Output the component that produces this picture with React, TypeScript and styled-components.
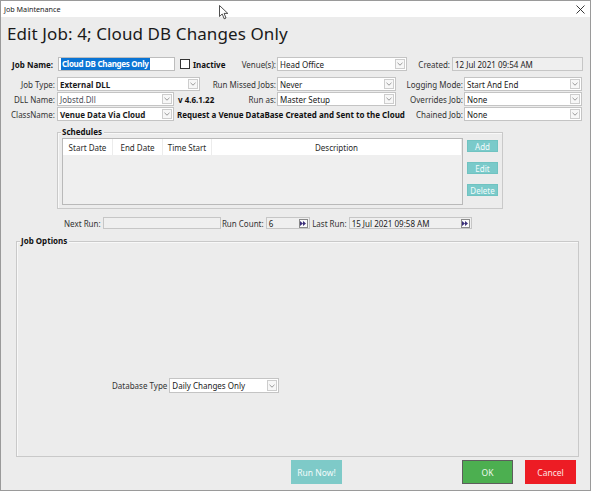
import React from "react";
import styled, { createGlobalStyle } from "styled-components";

const Global = createGlobalStyle`
  html, body { margin: 0; padding: 0; background: #ffffff; }
  * { box-sizing: border-box; }
`;

const Window = styled.div`
  position: relative;
  width: 591px;
  height: 491px;
  border: 1px solid #9a9a9a;
  background: #ececec;
  display: flex;
  flex-direction: column;
  overflow: hidden;
  font-family: "Noto Sans", "Open Sans", sans-serif;
  font-size: 8px;
  color: #262626;
`;

const TitleBar = styled.div`
  height: 16px;
  flex: none;
  background: #ffffff;
  display: flex;
  align-items: center;
  padding: 0 5px 0 3px;
  font-size: 7.2px;
  color: #1a1a1a;
`;

const TitleText = styled.span`
  flex: 1;
`;

const Cursor = styled.svg`
  position: absolute;
  left: 218px;
  top: 4px;
`;

const Heading = styled.h1`
  margin: 6px 0 0 0;
  padding-left: 6px;
  font-weight: 400;
  font-size: 17px;
  line-height: 22px;
  color: #1a1a1a;
  letter-spacing: 0.1px;
`;

const Form = styled.div`
  display: flex;
  flex-direction: column;
  margin-top: 12px;
`;

const Row = styled.div<{ $h?: number; $mt?: number; $pl?: number }>`
  display: flex;
  align-items: center;
  height: ${(p) => p.$h ?? 14}px;
  margin-top: ${(p) => p.$mt ?? 0}px;
  padding-left: ${(p) => p.$pl ?? 0}px;
  flex: none;
`;

const Label = styled.span<{ $w?: number; $pr?: number; $bold?: boolean }>`
  flex: none;
  width: ${(p) => (p.$w ? `${p.$w}px` : "auto")};
  padding-right: ${(p) => p.$pr ?? 1}px;
  text-align: right;
  white-space: nowrap;
  font-weight: ${(p) => (p.$bold ? 700 : 400)};
  color: ${(p) => (p.$bold ? "#111" : "#333")};
`;

const Cell = styled.span<{ $w: number; $pl?: number }>`
  flex: none;
  display: flex;
  align-items: center;
  width: ${(p) => p.$w}px;
  padding-left: ${(p) => p.$pl ?? 0}px;
  white-space: nowrap;
  font-weight: 700;
  color: #111;
`;

const TextBox = styled.div<{ $w: number; $h?: number; $gray?: boolean }>`
  flex: none;
  display: flex;
  align-items: center;
  width: ${(p) => p.$w}px;
  height: ${(p) => p.$h ?? 14}px;
  padding: 0 1px 0 2px;
  border: 1px solid ${(p) => (p.$gray ? "#c6c6c6" : "#bdbdbd")};
  background: ${(p) => (p.$gray ? "#efefef" : "#ffffff")};
  color: #222;
  white-space: nowrap;
`;

const Selected = styled.span`
  background: #0a74d4;
  color: #ffffff;
  font-weight: 700;
  padding: 0 1px;
  line-height: 12px;
  letter-spacing: -0.3px;
`;

const FillText = styled.span`
  flex: 1;
`;

const CheckBox = styled.span`
  width: 10px;
  height: 10px;
  border: 1px solid #333;
  background: #fff;
  margin-right: 3px;
  flex: none;
`;

const ComboBox = styled.div<{ $w: number; $h?: number }>`
  flex: none;
  display: flex;
  align-items: stretch;
  width: ${(p) => p.$w}px;
  height: ${(p) => p.$h ?? 14}px;
  border: 1px solid #c4c4c4;
  background: #ffffff;
`;

const ComboText = styled.span<{ $bold?: boolean; $dim?: boolean }>`
  flex: 1;
  display: flex;
  align-items: center;
  padding-left: 2px;
  white-space: nowrap;
  overflow: hidden;
  font-weight: ${(p) => (p.$bold ? 700 : 400)};
  color: ${(p) => (p.$dim ? "#4f4f5a" : "#1a1a1a")};
`;

const Arrow = styled.span`
  flex: none;
  width: 10px;
  margin: 1px 1px 1px 0;
  border: 1px solid #cdcdcd;
  background: #f7f7f7;
  display: flex;
  align-items: center;
  justify-content: center;
`;

const GroupBox = styled.div<{ $ml: number; $w: number; $h: number; $mt: number }>`
  position: relative;
  flex: none;
  margin-left: ${(p) => p.$ml}px;
  margin-top: ${(p) => p.$mt}px;
  width: ${(p) => p.$w}px;
  height: ${(p) => p.$h}px;
  border: 1px solid #c9c9c9;
  box-shadow: inset 1px 1px 0 #f8f8f8;
`;

const GroupTitle = styled.span`
  position: absolute;
  left: 3px;
  top: -7px;
  padding: 0 2px 0 1px;
  background: #ececec;
  font-weight: 700;
  color: #111;
  line-height: 12px;
`;

const ScheduleBody = styled.div`
  display: flex;
  gap: 4px;
  padding: 5px 4px 2px 4px;
  height: 100%;
`;

const ListView = styled.div`
  width: 401px;
  height: 67px;
  border: 1px solid #b9b9b9;
  background: #efefef;
  display: flex;
  flex-direction: column;
`;

const ListHeader = styled.div`
  display: grid;
  grid-template-columns: 50px 50px 49px 1fr;
  height: 16px;
  background: #ffffff;
`;

const HeaderCell = styled.span`
  display: flex;
  align-items: center;
  justify-content: center;
  border-right: 1px solid #ececec;
  color: #2a2a2a;
`;

const SideButtons = styled.div`
  display: flex;
  flex-direction: column;
  gap: 10px;
  padding-top: 2px;
`;

const TealButton = styled.button<{ $w: number; $h: number; $fs?: number }>`
  width: ${(p) => p.$w}px;
  height: ${(p) => p.$h}px;
  padding: 0;
  border: 1px solid #70c3c1;
  background: #7acaca;
  color: #f2fbfb;
  font-family: inherit;
  font-size: ${(p) => p.$fs ?? 8}px;
  display: flex;
  align-items: center;
  justify-content: center;
`;

const MiniButton = styled.span`
  width: 9px;
  height: 9px;
  border: 1px solid #8a8a8a;
  background: #fafafa;
  display: flex;
  align-items: center;
  justify-content: center;
  flex: none;
`;

const OptionsBody = styled.div`
  display: flex;
  align-items: center;
  padding: 136px 0 0 95px;
`;

const ButtonRow = styled.div`
  display: flex;
  align-items: center;
  margin-top: 3px;
  padding: 0 14px 0 290px;
  height: 24px;
`;

const ActionButton = styled.button<{ $bg: string; $border: string; $color: string; $ml?: number }>`
  width: 51px;
  height: 24px;
  padding: 0;
  margin-left: ${(p) => p.$ml ?? 0}px;
  border: 1px solid ${(p) => p.$border};
  background: ${(p) => p.$bg};
  color: ${(p) => p.$color};
  font-family: inherit;
  font-size: 8.5px;
`;

const Spacer = styled.span`
  flex: 1;
`;

const Chevron = () => (
  <svg width="6" height="4" viewBox="0 0 6 4">
    <path d="M0.5 0.8 L3 3.2 L5.5 0.8" fill="none" stroke="#8d8d8d" strokeWidth="0.9" />
  </svg>
);

const Combo: React.FC<{ w: number; text: string; bold?: boolean; dim?: boolean; h?: number }> = ({
  w,
  text,
  bold,
  dim,
  h,
}) => (
  <ComboBox $w={w} $h={h}>
    <ComboText $bold={bold} $dim={dim}>{text}</ComboText>
    <Arrow>
      <Chevron />
    </Arrow>
  </ComboBox>
);

const FastForward = () => (
  <MiniButton>
    <svg width="6" height="5" viewBox="0 0 6 5">
      <path d="M0 0 L3 2.5 L0 5 Z M3 0 L6 2.5 L3 5 Z" fill="#3b2f7a" />
    </svg>
  </MiniButton>
);

export default function App() {
  return (
    <>
      <Global />
      <Window>
        <TitleBar>
          <TitleText>Job Maintenance</TitleText>
          <svg width="9" height="9" viewBox="0 0 9 9">
            <path d="M0.5 0.5 L8.5 8.5 M8.5 0.5 L0.5 8.5" stroke="#222" strokeWidth="0.9" />
          </svg>
        </TitleBar>
        <Cursor width="11" height="15" viewBox="0 0 11 15">
          <path
            d="M0.5 0.5 L0.5 11.5 L3.2 9 L5.2 13.8 L7 13 L5.1 8.4 L8.8 8.4 Z"
            fill="#ffffff"
            stroke="#222"
            strokeWidth="0.8"
            strokeLinejoin="round"
          />
        </Cursor>

        <Heading>Edit Job: 4; Cloud DB Changes Only</Heading>

        <Form>
          <Row>
            <Label $w={57} $pr={5} $bold>Job Name:</Label>
            <TextBox $w={117}>
              <Selected>Cloud DB Changes Only</Selected>
            </TextBox>
            <Cell $w={53} $pl={5}>
              <CheckBox />
              Inactive
            </Cell>
            <Label $w={49}>Venue(s):</Label>
            <Combo w={130} text="Head Office" />
            <Label $w={45} $pr={2}>Created:</Label>
            <TextBox $w={131} $gray>
              <FillText>12 Jul 2021 09:54 AM</FillText>
            </TextBox>
          </Row>

          <Row $mt={6}>
            <Label $w={56} $pr={2}>Job Type:</Label>
            <Combo w={143} text="External DLL" bold />
            <Label $w={77}>Run Missed Jobs:</Label>
            <Combo w={119} text="Never" />
            <Label $w={68}>Logging Mode:</Label>
            <Combo w={118} text="Start And End" />
          </Row>

          <Row $mt={1}>
            <Label $w={56} $pr={2}>DLL Name:</Label>
            <Combo w={117} text="Jobstd.Dll" dim />
            <Cell $w={56} $pl={4}>v 4.6.1.22</Cell>
            <Label $w={47}>Run as:</Label>
            <Combo w={119} text="Master Setup" />
            <Label $w={68}>Overrides Job:</Label>
            <Combo w={118} text="None" />
          </Row>

          <Row $mt={1}>
            <Label $w={56} $pr={2}>ClassName:</Label>
            <Combo w={117} text="Venue Data Via Cloud" bold />
            <Cell $w={233} $pl={3}>Request a Venue DataBase Created and Sent to the Cloud</Cell>
            <Label $w={57}>Chained Job:</Label>
            <Combo w={118} text="None" />
          </Row>

          <GroupBox $ml={56} $w={446} $h={77} $mt={11}>
            <GroupTitle>Schedules</GroupTitle>
            <ScheduleBody>
              <ListView>
                <ListHeader>
                  <HeaderCell>Start Date</HeaderCell>
                  <HeaderCell>End Date</HeaderCell>
                  <HeaderCell>Time Start</HeaderCell>
                  <HeaderCell>Description</HeaderCell>
                </ListHeader>
              </ListView>
              <SideButtons>
                <TealButton $w={31} $h={12}>Add</TealButton>
                <TealButton $w={31} $h={12}>Edit</TealButton>
                <TealButton $w={31} $h={12}>Delete</TealButton>
              </SideButtons>
            </ScheduleBody>
          </GroupBox>

          <Row $h={12} $mt={8} $pl={63}>
            <Label $pr={2}>Next Run:</Label>
            <TextBox $w={118} $h={12} $gray />
            <Label $w={45} $pr={2}>Run Count:</Label>
            <TextBox $w={44} $h={12} $gray>
              <FillText>6</FillText>
              <FastForward />
            </TextBox>
            <Label $w={39} $pr={2}>Last Run:</Label>
            <TextBox $w={123} $h={12} $gray>
              <FillText>15 Jul 2021 09:58 AM</FillText>
              <FastForward />
            </TextBox>
          </Row>

          <GroupBox $ml={15} $w={563} $h={216} $mt={12}>
            <GroupTitle>Job Options</GroupTitle>
            <OptionsBody>
              <Label $pr={2}>Database Type</Label>
              <Combo w={110} h={15} text="Daily Changes Only" />
            </OptionsBody>
          </GroupBox>

          <ButtonRow>
            <ActionButton $bg="#7ecac8" $border="#7ecac8" $color="#f4fbfb">Run Now!</ActionButton>
            <Spacer />
            <ActionButton $bg="#4caf50" $border="#5d5d5d" $color="#eef8ee">OK</ActionButton>
            <ActionButton $bg="#ed1c24" $border="#ed1c24" $color="#fde3e3" $ml={12}>
              Cancel
            </ActionButton>
          </ButtonRow>
        </Form>
      </Window>
    </>
  );
}
